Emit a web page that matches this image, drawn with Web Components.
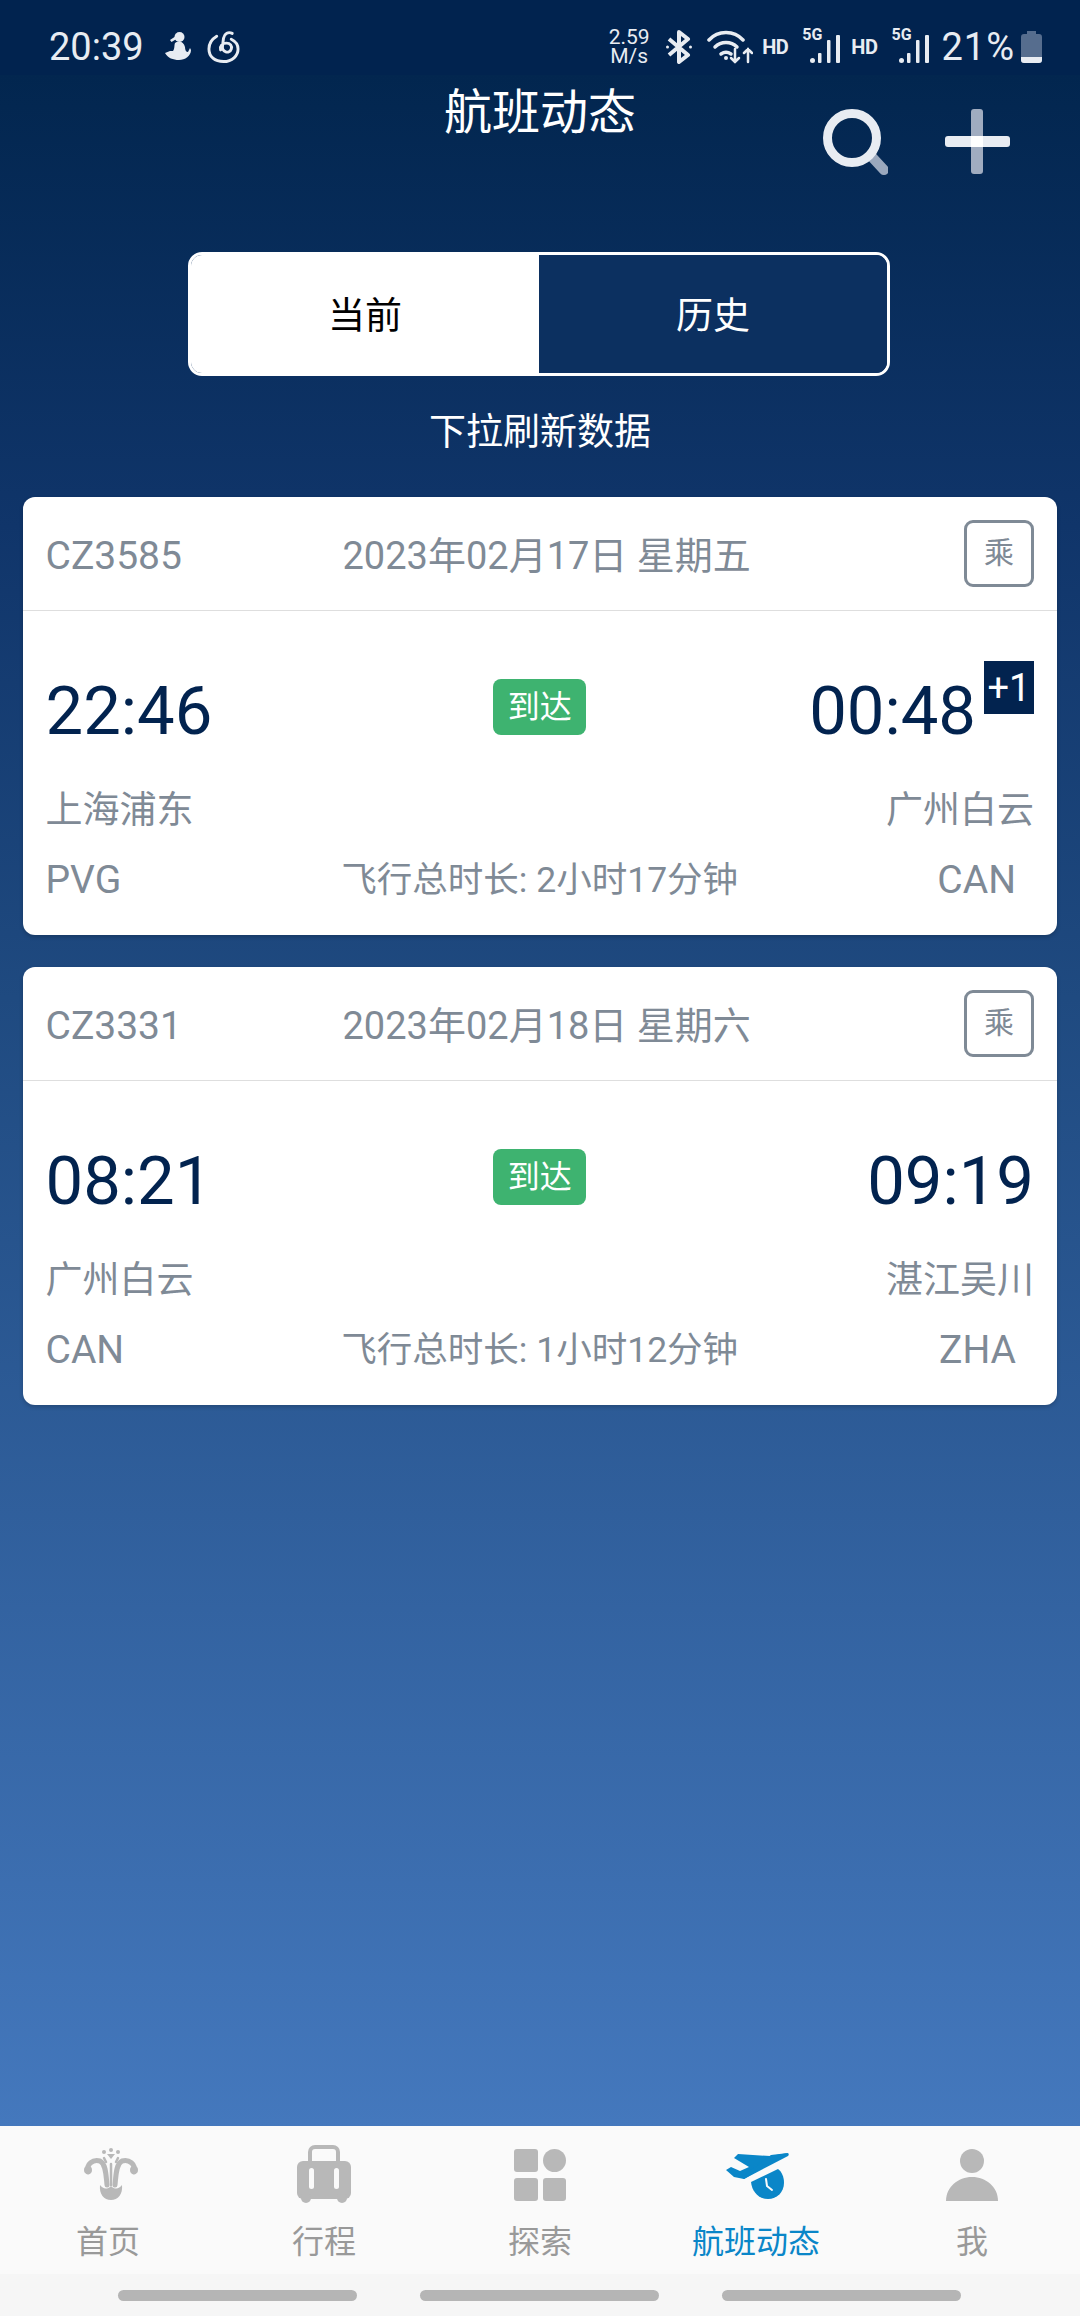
<!DOCTYPE html>
<html lang="zh-CN">
<head>
<meta charset="utf-8">
<title>航班动态</title>
<style>
  html, body { margin: 0; padding: 0; }
  body { width: 1080px; height: 2316px; overflow: hidden; font-family: Roboto, "Noto Sans CJK SC", sans-serif; }
</style>
</head>
<body>
<flight-app>
  <status-bar slot="status"></status-bar>
  <flight-header slot="header" title="航班动态"></flight-header>
  <segment-switch slot="header" left="当前" right="历史"></segment-switch>
  <flight-card flight="CZ3585" date="2023年02月17日 星期五" dep="22:46" arr="00:48" plus="+1" state="到达"
    from="上海浦东" to="广州白云" from-code="PVG" to-code="CAN" duration="飞行总时长: 2小时17分钟"></flight-card>
  <flight-card flight="CZ3331" date="2023年02月18日 星期六" dep="08:21" arr="09:19" state="到达"
    from="广州白云" to="湛江吴川" from-code="CAN" to-code="ZHA" duration="飞行总时长: 1小时12分钟"></flight-card>
  <tab-bar slot="tabs" active="3"></tab-bar>
</flight-app>

<script>
/** Page shell: status bar, gradient area with the cards, tab bar, gesture pills. */
class FlightApp extends HTMLElement {
  constructor() {
    super();
    this.attachShadow({ mode: 'open' });
  }

  connectedCallback() {
    this.shadowRoot.innerHTML = `
      <style>
        :host { display: flex; flex-direction: column; width: 1080px; height: 2316px; }
        .main {
          flex: 1;
          background: linear-gradient(180deg, #02264f 0%, #10356a 22%, #1f4a80 45%, #4478bd 100%);
        }
        .hint {
          height: 60px;
          margin-top: 27px;
          margin-bottom: 34px;
          line-height: 60px;
          text-align: center;
          color: #fff;
          font-size: 37px;
        }
        .cards { display: flex; flex-direction: column; gap: 32px; padding: 0 23px; }
        .pills {
          height: 42px;
          box-sizing: border-box;
          padding: 16px 1px 0 0;
          background: #f6f6f6;
          display: flex;
          justify-content: center;
          gap: 63px;
        }
        .pills i { width: 239px; height: 11px; border-radius: 6px; background: #b5b5b5; }
      </style>
      <slot name="status"></slot>
      <div class="main">
        <slot name="header"></slot>
        <div class="hint">下拉刷新数据</div>
        <div class="cards"><slot></slot></div>
      </div>
      <slot name="tabs"></slot>
      <div class="pills"><i></i><i></i><i></i></div>
    `;
  }
}

class StatusBar extends HTMLElement {
  constructor() {
    super();
    this.attachShadow({ mode: 'open' });
  }

  connectedCallback() {
    const signal = `
      <span class="signal">
        <b>5G</b>
        <svg width="38" height="34" viewBox="0 0 38 34" fill="#e8ecf2">
          <rect x="8" y="26" width="5" height="5" rx="2.500"/>
          <rect x="16" y="21" width="3.500" height="10" rx="1"/>
          <rect x="25" y="8" width="3.500" height="23" rx="1"/>
          <rect x="34" y="3" width="4" height="28" rx="1"/>
        </svg>
      </span>`;
    this.shadowRoot.innerHTML = `
      <style>
        :host {
          display: flex;
          align-items: center;
          height: 75px;
          box-sizing: border-box;
          padding: 28px 38px 9px 49px;
          background: #01234f;
          color: #e8ecf2;
          font-family: Roboto, sans-serif;
        }
        svg { display: block; flex: none; }
        .time { font-size: 38px; line-height: 40px; }
        .left { display: flex; align-items: center; gap: 15px; margin-left: 19px; }
        .right { display: flex; align-items: center; margin-left: auto; }
        .speed { font-size: 21px; line-height: 19px; text-align: center; width: 42px; }
        .hd { font-size: 20px; font-weight: 700; letter-spacing: -.5px; }
        .signal { position: relative; display: block; width: 38px; height: 38px; }
        .signal svg { position: absolute; left: 0; top: 4px; }
        .signal b { position: absolute; left: 0; top: -2px; font-size: 16px; line-height: 18px; }
        .pct { font-size: 38px; line-height: 40px; letter-spacing: 1px; }
      </style>
      <span class="time">20:39</span>
      <div class="left">
        <svg width="29" height="32" viewBox="2 8 29 30" fill="#e8ecf2">
          <circle cx="18.5" cy="13" r="5"/>
          <path d="M15 12l-6 4 1.500 2 5-3z"/>
          <path d="M14 19c4-3 9-1 10 4 0 3 1 5 3 5l2-4 1 2c0 6-6 10-12 10-6 0-11-2-14-7l5-2h3c2-3 1-5 2-8z"/>
        </svg>
        <svg width="33" height="34" viewBox="47 9 34 34" fill="none" stroke="#e8ecf2" stroke-width="3" stroke-linecap="round">
          <path d="M57 15c-5 3-8 8-8 13 0 8 6 13 15 13s15-6 15-13c0-5-3-8-7-10"/>
          <path d="M73 12c-4-2-8 0-9 5l-1 8c-1 6 7 9 9 3 1-3-1-6-5-6s-7 3-6 7"/>
        </svg>
      </div>
      <div class="right">
        <div class="speed">2.59<br>M/s</div>
        <svg style="margin-left:15px" width="28" height="34" viewBox="0 0 28 34" fill="none" stroke="#e8ecf2" stroke-width="4" stroke-linejoin="round">
          <path d="M4 9l19 16-9 7V2l9 7L4 25"/>
          <circle cx="2.500" cy="17" r="1.500" fill="#e8ecf2" stroke="none"/>
          <circle cx="25.500" cy="17" r="1.500" fill="#e8ecf2" stroke="none"/>
        </svg>
        <svg style="margin-left:14px" width="46" height="36" viewBox="0 0 46 36" fill="none" stroke="#e8ecf2" stroke-width="3.500" stroke-linecap="round">
          <path d="M2 11C11 1 27 1 36 11"/>
          <path d="M8 18c6-6 16-6 22 0"/>
          <path d="M14 25c3-2 7-2 10 0"/>
          <circle cx="19" cy="29" r="2" fill="#e8ecf2" stroke="none"/>
          <g stroke-width="2.500">
            <path d="M28 20v13M24 29l4 4 4-4"/>
            <path d="M41 33V20M37 24l4-4 4 4"/>
          </g>
        </svg>
        <span class="hd" style="margin-left:9px">HD</span>
        <span style="margin-left:14px">${signal}</span>
        <span class="hd" style="margin-left:11px">HD</span>
        <span style="margin-left:14px">${signal}</span>
        <span class="pct" style="margin-left:12px">21%</span>
        <svg style="margin-left:6px" width="21" height="32" viewBox="0 0 21 32">
          <path d="M6 0h9v3h3a3 3 0 0 1 3 3v23a3 3 0 0 1-3 3H3a3 3 0 0 1-3-3V6a3 3 0 0 1 3-3h3z" fill="#566d8e"/>
          <path d="M0 26h21v3a3 3 0 0 1-3 3H3a3 3 0 0 1-3-3z" fill="#e8ecf2"/>
        </svg>
      </div>
    `;
  }
}

class FlightHeader extends HTMLElement {
  constructor() {
    super();
    this.attachShadow({ mode: 'open' });
  }

  connectedCallback() {
    this.shadowRoot.innerHTML = `
      <style>
        :host {
          display: grid;
          grid-template-columns: 1fr auto 1fr;
          height: 177px;
          color: #fff;
        }
        h1 { grid-column: 2; margin: 0; font-size: 48px; font-weight: 400; line-height: 76px; }
        .actions { justify-self: end; display: flex; gap: 57px; padding: 34px 70px 0 0; align-items: flex-start; }
        svg { display: block; }
      </style>
      <h1>${this.getAttribute('title')}</h1>
      <div class="actions">
        <svg width="65" height="66" viewBox="0 0 65 66" fill="none">
          <path d="M49 48l12 13" stroke="#9aa8bd" stroke-width="10" stroke-linecap="round"/>
          <circle cx="29" cy="29" r="24.500" stroke="#e8ecf2" stroke-width="9"/>
        </svg>
        <svg width="65" height="65" viewBox="0 0 65 65">
          <rect x="26" y="0" width="12" height="65" rx="3" fill="#a0acc0"/>
          <rect x="0" y="27" width="65" height="11" rx="3" fill="#e8ecf2"/>
          <rect x="26" y="27" width="12" height="11" fill="#fff"/>
        </svg>
      </div>
    `;
  }
}

class SegmentSwitch extends HTMLElement {
  constructor() {
    super();
    this.attachShadow({ mode: 'open' });
  }

  connectedCallback() {
    this.shadowRoot.innerHTML = `
      <style>
        :host {
          display: grid;
          grid-template-columns: 1fr 1fr;
          width: 702px;
          height: 124px;
          margin-left: 188px;
          box-sizing: border-box;
          border: 3px solid #fff;
          border-radius: 14px;
          font-size: 37px;
          line-height: 124px;
          text-align: center;
          overflow: hidden;
        }
        .on { background: #fff; color: #000; }
        .off { background: #0c3060; color: #fff; }
      </style>
      <div class="on">${this.getAttribute('left')}</div>
      <div class="off">${this.getAttribute('right')}</div>
    `;
  }
}

class FlightCard extends HTMLElement {
  constructor() {
    super();
    this.attachShadow({ mode: 'open' });
  }

  connectedCallback() {
    const attr = name => this.getAttribute(name) || '';
    this.shadowRoot.innerHTML = `
      <style>
        :host {
          display: block;
          height: 438px;
          background: #fff;
          border-radius: 12px;
          color: #7f8a96;
          box-shadow: 0 2px 4px rgba(0, 0, 0, .2);
          font-size: 39px;
        }
        .head {
          display: grid;
          grid-template-columns: 297px 1fr auto;
          align-items: center;
          height: 114px;
          box-sizing: border-box;
          padding: 0 23px 0 22.5px;
          border-bottom: 1px solid #dedede;
          line-height: 50px;
        }
        .label { padding-top: 4px; }
        .date { font-size: 38px; }
        .ride {
          width: 70px;
          height: 67px;
          box-sizing: border-box;
          border: 3px solid #7f8a96;
          border-radius: 9px;
          font-size: 30px;
          line-height: 60px;
          text-align: center;
        }
        .times {
          display: grid;
          grid-template-columns: 1fr auto 1fr;
          align-items: center;
          height: 80px;
          margin-top: 60px;
          padding: 0 23px 0 22.5px;
        }
        .time { font-size: 67px; line-height: 80px; color: #02234f; }
        .arr { display: flex; justify-content: flex-end; gap: 8px; }
        .plus {
          width: 50px;
          height: 53px;
          margin-top: -10px;
          background: #02234f;
          color: #fff;
          font-size: 38px;
          line-height: 54px;
          text-align: center;
        }
        .state {
          width: 93px;
          height: 56px;
          border-radius: 8px;
          background: #3eb370;
          color: #fff;
          font-size: 32px;
          line-height: 56px;
          text-align: center;
          margin-top: -2px;
          margin-bottom: 6px;
        }
        .row { display: flex; justify-content: space-between; padding: 0 23px 0 22.5px; line-height: 50px; }
        .cities { margin-top: 35px; font-size: 37px; }
        .codes {
          display: grid;
          grid-template-columns: 1fr auto 1fr;
          margin-top: 19px;
          padding: 0 23px 0 22.5px;
          line-height: 50px;
        }
        .duration { font-size: 35.500px; }
        .to-code { text-align: right; padding-right: 18px; }
      </style>
      <div class="head">
        <span class="label">${attr('flight')}</span>
        <span class="label date">${attr('date')}</span>
        <span class="ride">乘</span>
      </div>
      <div class="times">
        <span class="time">${attr('dep')}</span>
        <span class="state">${attr('state')}</span>
        <div class="arr">
          <span class="time">${attr('arr')}</span>
          ${attr('plus') ? `<span class="plus">${attr('plus')}</span>` : ''}
        </div>
      </div>
      <div class="row cities"><span>${attr('from')}</span><span>${attr('to')}</span></div>
      <div class="codes">
        <span>${attr('from-code')}</span>
        <span class="duration">${attr('duration')}</span>
        <span class="to-code">${attr('to-code')}</span>
      </div>
    `;
  }
}

const TAB_ICONS = [
  `<g fill="none" stroke="#b8b8b8" stroke-linecap="round">
     <path d="M25 32c-2-8 5-13 12-11 6 3 6 14 7 24" stroke-width="5"/>
     <path d="M71 32c2-8-5-13-12-11-6 3-6 14-7 24" stroke-width="5"/>
     <path d="M48 24v21M41 18l2 4M55 18l-2 4" stroke-width="2.500"/>
   </g>
   <g fill="#b8b8b8">
     <circle cx="25" cy="30" r="4"/><circle cx="71" cy="30" r="4"/>
     <circle cx="41" cy="12" r="2"/><circle cx="55" cy="12" r="2"/><circle cx="48" cy="10" r="2"/>
     <path d="M44 14h8l-4 5z"/>
     <path d="M37 45c3 4 7 5 11 1 4 4 8 3 11-1 1 9-4 15-11 15s-12-6-11-15z"/>
   </g>`,
  `<g fill="#b8b8b8">
     <path d="M24 21h42a6 6 0 0 1 6 6v26a6 6 0 0 1-6 6H24a6 6 0 0 1-6-6V27a6 6 0 0 1 6-6z"/>
     <circle cx="27" cy="58" r="5"/><circle cx="63" cy="58" r="5"/>
     <path d="M31 22V12a5 5 0 0 1 5-5h18a5 5 0 0 1 5 5v10" fill="none" stroke="#b8b8b8" stroke-width="4"/>
   </g>
   <rect x="30" y="28" width="5" height="21" rx="2.500" fill="#fafafa"/>
   <rect x="55" y="28" width="5" height="21" rx="2.500" fill="#fafafa"/>`,
  `<g fill="#b8b8b8">
     <rect x="19" y="9" width="24" height="23" rx="3"/>
     <circle cx="59.500" cy="20.500" r="11.500"/>
     <rect x="19" y="38" width="24" height="23" rx="3"/>
     <rect x="48" y="38" width="23" height="23" rx="3"/>
   </g>`,
  `<path fill="#0a86c8" d="M77 13 59 16 27 14 23 18 38 27 29 31 20 27 15 30 23 37 33 39 Z"/>
   <path fill="#0a86c8" d="M77 13c1 1 1 2 0 3L33 39l-3-2 L60 15z"/>
   <path fill="#0a86c8" d="M40 42 67 29c4 3 6 8 6 14 0 9-7 16-16 16S41 52 40 42z"/>
   <path fill="none" stroke="#fafafa" stroke-width="2" stroke-linecap="round" d="M55 39l1 7 5 4"/>`,
  `<g fill="#b8b8b8">
     <circle cx="45" cy="21" r="12"/>
     <path d="M19 61c0-14 12-24 26-24s26 10 26 24z"/>
   </g>`
];

class TabBar extends HTMLElement {
  constructor() {
    super();
    this.attachShadow({ mode: 'open' });
  }

  connectedCallback() {
    const labels = ['首页', '行程', '探索', '航班动态', '我'];
    const active = Number(this.getAttribute('active'));
    this.shadowRoot.innerHTML = `
      <style>
        :host {
          display: grid;
          grid-template-columns: repeat(5, 1fr);
          height: 148px;
          box-sizing: border-box;
          padding-top: 14px;
          background: #fafafa;
          font-size: 32px;
          color: #999;
        }
        .tab { display: flex; flex-direction: column; align-items: center; }
        .tab.on { color: #0a86c8; }
        svg { display: block; }
        span { line-height: 46px; margin-top: 9px; }
      </style>
      ${labels.map((label, i) => `
        <div class="tab ${i === active ? 'on' : ''}">
          <svg width="90" height="70" viewBox="0 0 90 70">${TAB_ICONS[i]}</svg>
          <span>${label}</span>
        </div>
      `).join('')}
    `;
  }
}

customElements.define('flight-app', FlightApp);
customElements.define('status-bar', StatusBar);
customElements.define('flight-header', FlightHeader);
customElements.define('segment-switch', SegmentSwitch);
customElements.define('flight-card', FlightCard);
customElements.define('tab-bar', TabBar);
</script>
</body>
</html>
